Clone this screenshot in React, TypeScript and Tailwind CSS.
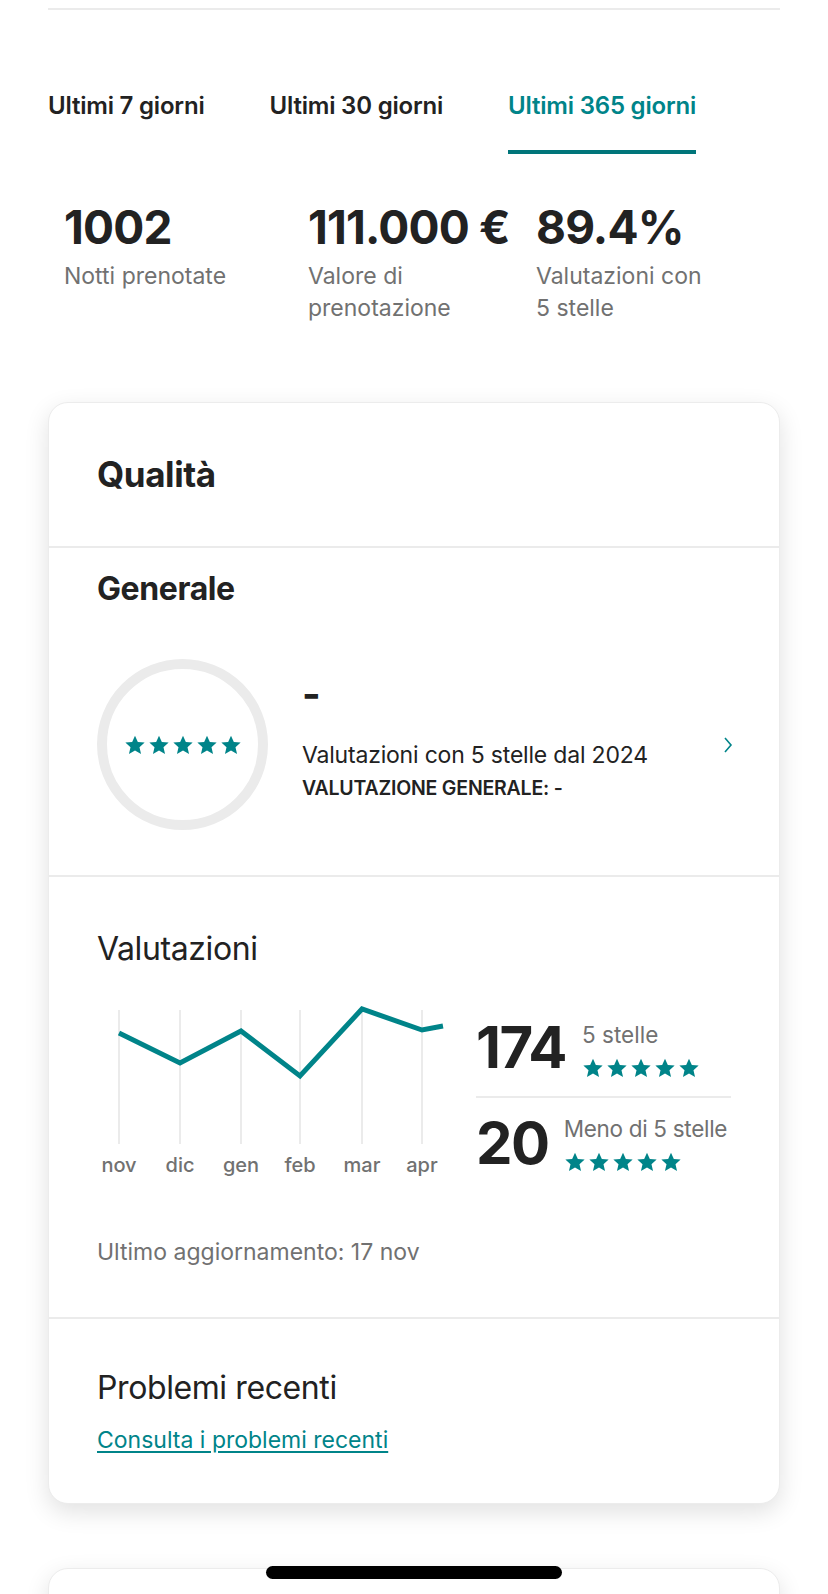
import React from 'react';

const TEAL = '#008489';

const tabs = ['Ultimi 7 giorni', 'Ultimi 30 giorni', 'Ultimi 365 giorni'];

const stats = [
  { value: '1002', label: 'Notti prenotate', width: 'w-[244px]' },
  { value: '111.000 €', label: 'Valore di prenotazione', width: 'w-[228px]' },
  { value: '89.4%', label: 'Valutazioni con 5 stelle', width: 'w-[200px]' },
];

const months = ['nov', 'dic', 'gen', 'feb', 'mar', 'apr'];
const gridX = [22, 83, 144, 203, 265, 325];
const points: [number, number][] = [
  [22, 35],
  [83, 65],
  [144, 33],
  [203, 78],
  [265, 11],
  [325, 32],
  [346, 28],
];

function Star({ size = 22 }: { size?: number }) {
  return (
    <svg width={size} height={size} viewBox="0 0 24 24" aria-hidden>
      <path
        fill={TEAL}
        d="M12 1.8l3.1 6.9 7.4.7-5.6 5 1.7 7.4L12 17.9 5.4 21.8l1.7-7.4-5.6-5 7.4-.7z"
      />
    </svg>
  );
}

function Stars() {
  return (
    <div className="flex items-center gap-[2px]">
      {[0, 1, 2, 3, 4].map((i) => (
        <Star key={i} />
      ))}
    </div>
  );
}

function Chart() {
  return (
    <svg width={350} height={182} viewBox="0 0 350 182" className="shrink-0">
      {gridX.map((x) => (
        <line key={x} x1={x} y1={12} x2={x} y2={146} stroke="#e4e4e4" strokeWidth={1.5} />
      ))}
      <polyline
        points={points.map((p) => p.join(',')).join(' ')}
        fill="none"
        stroke={TEAL}
        strokeWidth={5}
        strokeLinejoin="miter"
      />
      {months.map((m, i) => (
        <text
          key={m}
          x={gridX[i]}
          y={174}
          textAnchor="middle"
          fill="#717171"
          fontSize={20}
          fontWeight={500}
          fontFamily="Inter, sans-serif"
        >
          {m}
        </text>
      ))}
    </svg>
  );
}

export default function App() {
  return (
    <div className="relative h-[1594px] overflow-hidden bg-white text-[#222222] [font-family:Inter,'Noto_Sans',sans-serif]">
      <div className="mx-[48px] h-[10px] border-b-2 border-[#ebebeb]" />

      {/* period tabs */}
      <div className="mx-[48px] mt-[83px] flex gap-[65px]">
        {tabs.map((tab, i) => (
          <div key={tab} className="flex flex-col">
            <span
              className={
                i === 2
                  ? 'text-[24px] font-semibold leading-[26px] tracking-[-0.2px] text-[#008489]'
                  : 'text-[24px] font-semibold leading-[26px] tracking-[-0.2px] text-[#222222]'
              }
            >
              {tab}
            </span>
            <div className={i === 2 ? 'mt-[31px] h-[4px] bg-[#00757a]' : 'mt-[31px] h-[4px]'} />
          </div>
        ))}
      </div>

      {/* totals */}
      <div className="ml-[64px] mt-[47px] flex">
        {stats.map((s) => (
          <div key={s.value} className={s.width}>
            <div className="text-[46px] font-bold leading-[52px] tracking-[-0.8px]">{s.value}</div>
            <div className="mt-[7px] w-[175px] text-[23px] leading-[32px] text-[#717171]">{s.label}</div>
          </div>
        ))}
      </div>

      {/* quality card */}
      <div className="mx-[48px] mt-[78px] rounded-[20px] border border-[#ececec] bg-white shadow-[0_8px_24px_rgba(0,0,0,0.12)]">
        <div className="flex h-[145px] items-center border-b-2 border-[#ebebeb] px-[48px]">
          <h2 className="text-[35px] font-bold tracking-[-0.4px]">Qualità</h2>
        </div>

        <div className="border-b-2 border-[#ebebeb] px-[48px] pb-[45px] pt-[23px]">
          <h3 className="text-[32px] font-bold leading-[36px] tracking-[-0.4px]">Generale</h3>
          <div className="mt-[52px] flex items-start">
            <div className="flex h-[171px] w-[171px] shrink-0 items-center justify-center rounded-full border-[10px] border-[#ebebeb]">
              <Stars />
            </div>
            <div className="ml-[34px] flex-1 pt-[17px]">
              <div className="text-[40px] font-bold leading-[36px]">-</div>
              <div className="mt-[29px] text-[23px] leading-[28px] tracking-[-0.2px]">
                Valutazioni con 5 stelle dal 2024
              </div>
              <div className="mt-[7px] text-[19.5px] font-semibold leading-[24px] tracking-[-0.2px]">
                VALUTAZIONE GENERALE: -
              </div>
            </div>
            <svg width="10" height="18" viewBox="0 0 10 18" className="-mr-[2px] self-center" aria-hidden>
              <path d="M2 2l6 7-6 7" fill="none" stroke={TEAL} strokeWidth="1.6" />
            </svg>
          </div>
        </div>

        <div className="border-b-2 border-[#ebebeb] px-[48px] pb-[50px] pt-[54px]">
          <h3 className="text-[32px] leading-[36px] tracking-[-0.4px]">Valutazioni</h3>
          <div className="mt-[31px] flex">
            <Chart />
            <div className="ml-[29px] mt-[18px] w-[255px]">
              <div className="flex items-start border-b-2 border-[#ebebeb] pb-[17px]">
                <span className="text-[58px] font-bold leading-[62px] tracking-[-1.5px]">174</span>
                <div className="ml-[16px] pt-[6px]">
                  <div className="whitespace-nowrap text-[22.5px] leading-[26px] text-[#717171]">5 stelle</div>
                  <div className="mt-[9px]">
                    <Stars />
                  </div>
                </div>
              </div>
              <div className="flex items-start pt-[14px]">
                <span className="text-[58px] font-bold leading-[62px] tracking-[-1.5px]">20</span>
                <div className="ml-[15px] pt-[4px]">
                  <div className="whitespace-nowrap text-[22.5px] leading-[26px] tracking-[-0.3px] text-[#717171]">
                    Meno di 5 stelle
                  </div>
                  <div className="mt-[9px]">
                    <Stars />
                  </div>
                </div>
              </div>
            </div>
          </div>
          <p className="mt-[57px] text-[23px] leading-[30px] text-[#717171]">Ultimo aggiornamento: 17 nov</p>
        </div>

        <div className="px-[48px] pb-[48px] pt-[51px]">
          <h3 className="text-[32px] leading-[36px] tracking-[-0.4px]">Problemi recenti</h3>
          <a
            href="#"
            className="mt-[19px] inline-block text-[23px] leading-[30px] text-[#008489] underline underline-offset-[3px]"
          >
            Consulta i problemi recenti
          </a>
        </div>
      </div>

      {/* next card peeking in */}
      <div className="mx-[48px] mt-[64px] h-[120px] rounded-[20px] border border-[#ececec] bg-white shadow-[0_8px_24px_rgba(0,0,0,0.12)]" />

      {/* home indicator */}
      <div className="absolute bottom-[15px] left-[266px] h-[13px] w-[296px] rounded-full bg-black" />
    </div>
  );
}
